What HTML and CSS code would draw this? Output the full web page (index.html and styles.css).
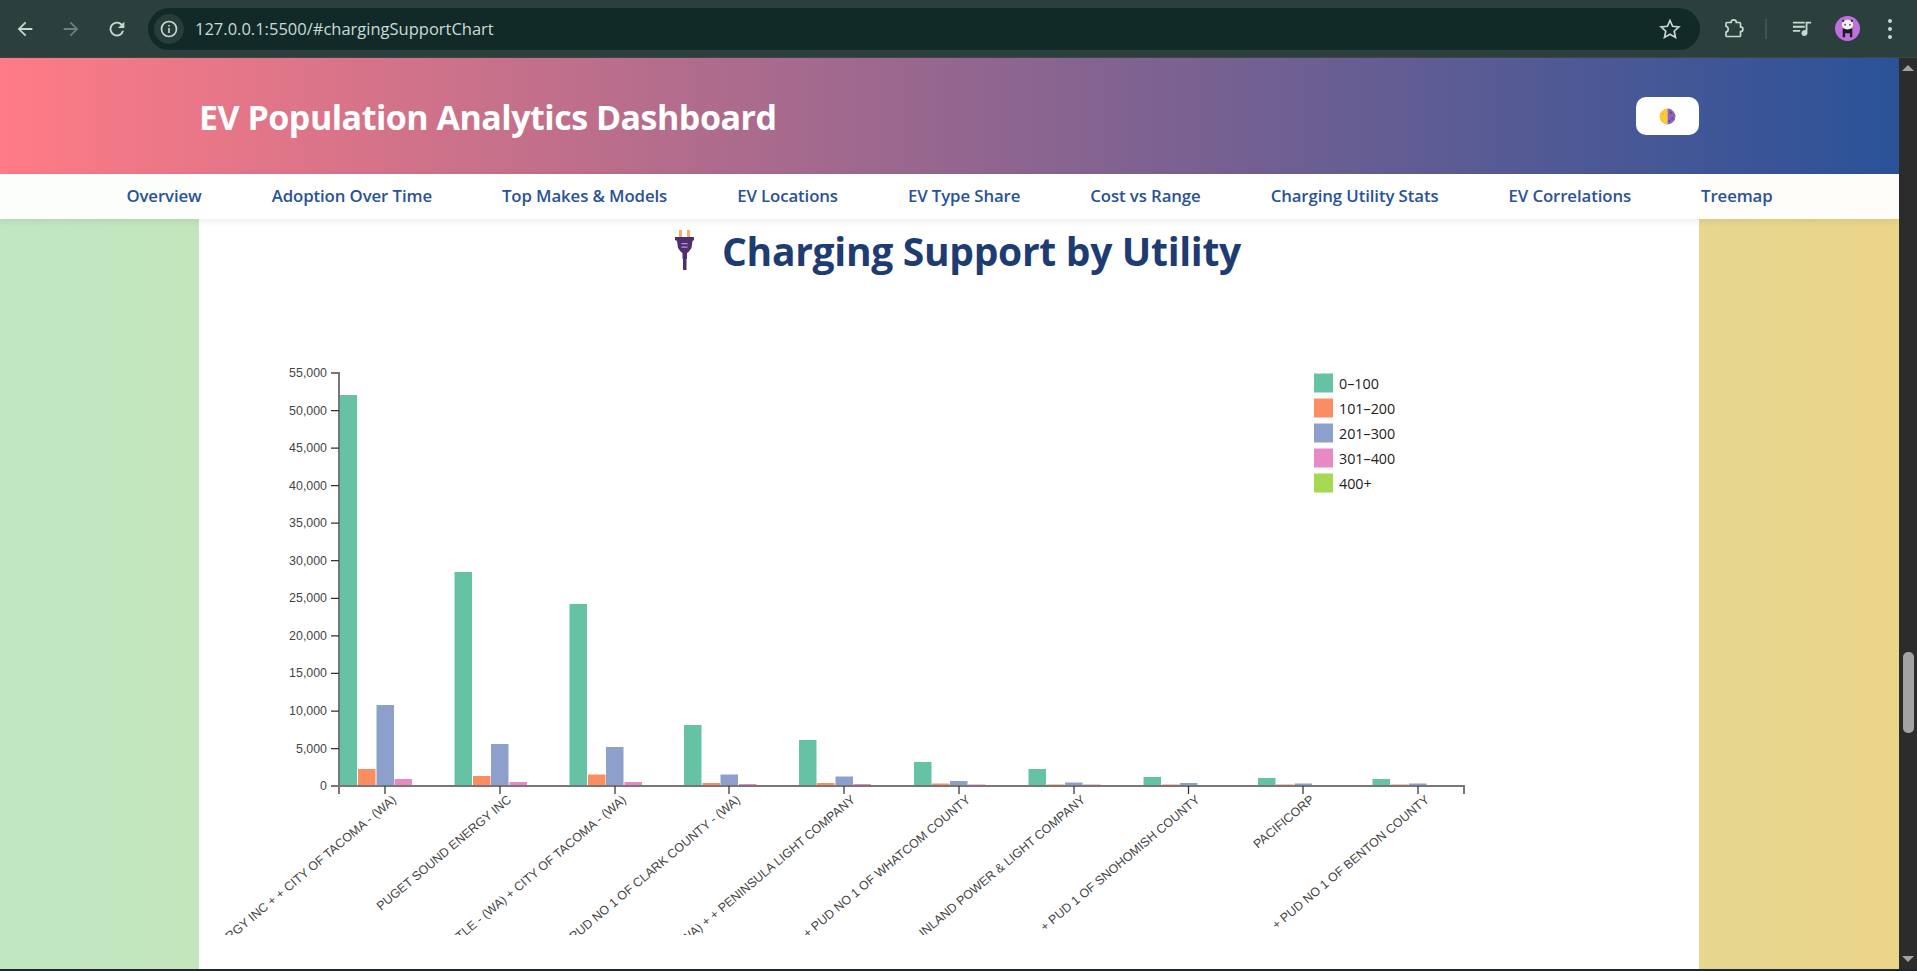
FILE: index.html
```html
<!DOCTYPE html>
<html lang="en">
<head>
    <meta charset="UTF-8">
    <title>EV Population Analytics Dashboard</title>
    <link rel="stylesheet" href="styles.css">
</head>
<body>
    <div class="toolbar">
        <div class="nav-buttons">
            <svg class="tool-icon" viewBox="0 0 24 24"><path d="M20 11H7.8l5.6-5.6L12 4l-8 8 8 8 1.4-1.4L7.8 13H20z"/></svg>
            <svg class="tool-icon disabled" viewBox="0 0 24 24"><path d="M4 11h12.2l-5.6-5.6L12 4l8 8-8 8-1.4-1.4 5.6-5.6H4z"/></svg>
            <svg class="tool-icon" viewBox="0 0 24 24"><path d="M17.6 6.4A8 8 0 1 0 19.7 14h-2.1a6 6 0 1 1-1.4-6.2L13 11h7V4z"/></svg>
        </div>
        <div class="omnibox">
            <span class="site-info">
                <svg viewBox="0 0 20 20"><circle cx="10" cy="10" r="7.5" class="line"/><path d="M9.2 9h1.6v5H9.2zM9.2 6h1.6v1.6H9.2z"/></svg>
            </span>
            <span class="url">127.0.0.1:5500/#chargingSupportChart</span>
            <svg class="star" viewBox="0 0 24 24"><path class="line" d="M12 3.5l2.6 5.8 6.3.7-4.7 4.2 1.3 6.2-5.5-3.2-5.5 3.2 1.3-6.2L3.100 10l6.300-.7z"/></svg>
        </div>
        <div class="tool-right">
            <svg class="puzzle" viewBox="0 0 22 22"><path class="line" d="M3 5.500a1 1 0 0 1 1-1h4a2.700 2.700 0 0 1 5.400 0h3.100a1 1 0 0 1 1 1v3.300a2.400 2.400 0 0 1 0 4.800v3.900a1 1 0 0 1-1 1H4a1 1 0 0 1-1-1v-3.400a3 3 0 0 0 0-5.800z"/></svg>
            <span class="divider"></span>
            <svg class="media" viewBox="0 0 22 22"><path d="M1 3h13v2H1zM1 7.500h13v2H1zM1 12h8v2H1zM15 3h6v2h-4v10.500a3.300 3.300 0 1 1-2-3z"/></svg>
            <span class="avatar">
                <svg viewBox="0 0 26 26"><path fill="#1c1c1c" d="M8 13h10v9h-2.500v-4h-5v4H8z"/><ellipse cx="13" cy="9" rx="6" ry="5" fill="#f2f2f2"/><circle cx="10.500" cy="9" r=".9" fill="#444"/><circle cx="15.500" cy="9" r=".9" fill="#444"/><circle cx="8.500" cy="5" r="1.200" fill="#222"/><circle cx="17.500" cy="5" r="1.200" fill="#222"/></svg>
            </span>
            <span class="dots"><i></i><i></i><i></i></span>
        </div>
    </div>

    <div class="window">
        <div class="page">
            <header class="site-header">
                <div class="header-inner">
                    <h1>EV Population Analytics Dashboard</h1>
                    <button class="theme-toggle" type="button">
                        <svg viewBox="0 0 18 18">
                            <path fill="#fdc92f" d="M9 .6a8.400 8.400 0 0 0 0 16.800z"/>
                            <path fill="#8a63b8" d="M9 .6a8.400 8.400 0 0 1 0 16.800z"/>
                            <circle cx="12.500" cy="5" r="1.200" fill="#5f3f8f"/>
                            <circle cx="14" cy="11" r="1" fill="#5f3f8f"/>
                            <circle cx="11" cy="14" r="1" fill="#5f3f8f"/>
                            <circle cx="4.500" cy="6" r="1.100" fill="#f0b429"/>
                        </svg>
                    </button>
                </div>
            </header>

            <nav class="site-nav">
                <a href="#overview">Overview</a>
                <a href="#adoption">Adoption Over Time</a>
                <a href="#makes">Top Makes &amp; Models</a>
                <a href="#locations">EV Locations</a>
                <a href="#types">EV Type Share</a>
                <a href="#cost">Cost vs Range</a>
                <a href="#chargingSupportChart">Charging Utility Stats</a>
                <a href="#correlations">EV Correlations</a>
                <a href="#treemap">Treemap</a>
            </nav>

            <main class="card">
                <h2>
                    <svg class="plug" viewBox="0 0 19 40">
                        <path fill="#f4b06a" d="M4 0h3v8H4zM12 0h3v8h-3z"/>
                        <path fill="#4f2f6e" d="M0 7h19v3l-1.500 1-1 7-3 4-1.500 1v6h-.5v11H8V29H7.500v-6L6 22l-3-4-1-7-2-1z"/>
                        <path fill="#c08ee8" d="M6.500 13h6v1.300h-6zM6.500 16.500h6v1.300h-6z"/>
                    </svg>
                    <span>Charging Support by Utility</span>
                </h2>

                <svg class="chart" viewBox="199 300 1500 635">
                    <g class="bars">
                        <rect class="c0" x="339.500" y="395" width="17.500" height="391"/>
                        <rect class="c1" x="358" y="769" width="17.500" height="17"/>
                        <rect class="c2" x="376.500" y="705" width="17.500" height="81"/>
                        <rect class="c3" x="394.500" y="779" width="17.500" height="7"/>

                        <rect class="c0" x="454.500" y="572" width="17.500" height="214"/>
                        <rect class="c1" x="473" y="776" width="17.500" height="10"/>
                        <rect class="c2" x="491" y="744" width="17.500" height="42"/>
                        <rect class="c3" x="509.500" y="782" width="17.500" height="4"/>

                        <rect class="c0" x="569.500" y="604" width="17.500" height="182"/>
                        <rect class="c1" x="588" y="774.500" width="17.500" height="11.500"/>
                        <rect class="c2" x="606" y="747" width="17.500" height="39"/>
                        <rect class="c3" x="624.500" y="782" width="17.500" height="4"/>

                        <rect class="c0" x="684" y="725" width="17.500" height="61"/>
                        <rect class="c1" x="702.500" y="783" width="17.500" height="3"/>
                        <rect class="c2" x="720.500" y="774.500" width="17.500" height="11.500"/>
                        <rect class="c3" x="739" y="784" width="17.500" height="2"/>

                        <rect class="c0" x="799" y="740" width="17.500" height="46"/>
                        <rect class="c1" x="817" y="783" width="17.500" height="3"/>
                        <rect class="c2" x="835.500" y="776.500" width="17.500" height="9.500"/>
                        <rect class="c3" x="853.500" y="784" width="17.500" height="2"/>

                        <rect class="c0" x="914" y="762" width="17.500" height="24"/>
                        <rect class="c1" x="932" y="783.500" width="17.500" height="2.500"/>
                        <rect class="c2" x="950" y="781" width="17.500" height="5"/>
                        <rect class="c3" x="968" y="784.500" width="17.500" height="1.500"/>

                        <rect class="c0" x="1028.500" y="769" width="17.500" height="17"/>
                        <rect class="c1" x="1047" y="784.500" width="17.500" height="1.500"/>
                        <rect class="c2" x="1065" y="782.500" width="17.500" height="3.500"/>
                        <rect class="c3" x="1083" y="784.500" width="17.500" height="1.500"/>

                        <rect class="c0" x="1143.500" y="777" width="17.500" height="9"/>
                        <rect class="c1" x="1162" y="784.500" width="17.500" height="1.500"/>
                        <rect class="c2" x="1180" y="783" width="17.500" height="3"/>

                        <rect class="c0" x="1258" y="778" width="17.500" height="8"/>
                        <rect class="c1" x="1276" y="784.500" width="17.500" height="1.500"/>
                        <rect class="c2" x="1294.500" y="783.500" width="17.500" height="2.500"/>

                        <rect class="c0" x="1372.500" y="779" width="17.500" height="7"/>
                        <rect class="c1" x="1391" y="784.500" width="17.500" height="1.500"/>
                        <rect class="c2" x="1409" y="783.500" width="17.500" height="2.500"/>
                    </g>

                    <g class="axis">
                        <path class="domain" d="M331 373H339V786H331"/>
                        <path class="domain" d="M339 794V786H1464V794"/>
                        <path d="M331 410.500h8M331 448h8M331 485.600h8M331 523.200h8M331 560.700h8M331 598.300h8M331 635.800h8M331 673.400h8M331 711h8M331 748.500h8"/>
                        <path d="M385 786v8M500 786v8M615 786v8M729 786v8M844 786v8M959 786v8M1074 786v8M1188.500 786v8M1303 786v8M1418 786v8"/>
                    </g>

                    <g class="y-labels">
                        <text x="327" y="377">55,000</text>
                        <text x="327" y="414.500">50,000</text>
                        <text x="327" y="452">45,000</text>
                        <text x="327" y="489.600">40,000</text>
                        <text x="327" y="527.200">35,000</text>
                        <text x="327" y="564.700">30,000</text>
                        <text x="327" y="602.300">25,000</text>
                        <text x="327" y="639.800">20,000</text>
                        <text x="327" y="677.400">15,000</text>
                        <text x="327" y="715">10,000</text>
                        <text x="327" y="752.500">5,000</text>
                        <text x="327" y="790">0</text>
                    </g>

                    <g class="x-labels">
                        <text transform="translate(397 801) rotate(-40)">PUGET SOUND ENERGY INC + + CITY OF TACOMA - (WA)</text>
                        <text transform="translate(512 801) rotate(-40)">PUGET SOUND ENERGY INC</text>
                        <text transform="translate(627 801) rotate(-40)">CITY OF SEATTLE - (WA) + CITY OF TACOMA - (WA)</text>
                        <text transform="translate(741 801) rotate(-40)">BONNEVILLE POWER + PUD NO 1 OF CLARK COUNTY - (WA)</text>
                        <text transform="translate(856 801) rotate(-40)">BONNEVILLE POWER - (WA) + + PENINSULA LIGHT COMPANY</text>
                        <text transform="translate(971 801) rotate(-40)">+ PUD NO 1 OF WHATCOM COUNTY</text>
                        <text transform="translate(1086 801) rotate(-40)">INLAND POWER &amp; LIGHT COMPANY</text>
                        <text transform="translate(1200.500 801) rotate(-40)">+ PUD 1 OF SNOHOMISH COUNTY</text>
                        <text transform="translate(1315 801) rotate(-40)">PACIFICORP</text>
                        <text transform="translate(1430 801) rotate(-40)">+ PUD NO 1 OF BENTON COUNTY</text>
                    </g>

                    <g class="legend">
                        <rect class="c0" x="1314" y="373.500" width="19" height="19"/>
                        <rect class="c1" x="1314" y="398.500" width="19" height="19"/>
                        <rect class="c2" x="1314" y="423.500" width="19" height="19"/>
                        <rect class="c3" x="1314" y="448.500" width="19" height="19"/>
                        <rect class="c4" x="1314" y="473.500" width="19" height="19"/>
                        <text x="1339" y="388.500">0–100</text>
                        <text x="1339" y="413.500">101–200</text>
                        <text x="1339" y="438.500">201–300</text>
                        <text x="1339" y="463.500">301–400</text>
                        <text x="1339" y="488.500">400+</text>
                    </g>
                </svg>
            </main>
        </div>

        <div class="scrollbar">
            <span class="arrow up"></span>
            <div class="track"><span class="thumb"></span></div>
            <span class="arrow down"></span>
        </div>
    </div>
    <div class="window-edge"></div>
</body>
</html>
```

FILE: styles.css
```css
html, body {
    margin: 0;
    padding: 0;
    height: 971px;
    overflow: hidden;
}
body {
    display: flex;
    flex-direction: column;
    font-family: "Open Sans", "Noto Sans", Arial, sans-serif;
    background: #1e2a30;
}

/* browser bar */
.toolbar {
    flex: 0 0 57px;
    display: flex;
    align-items: center;
    background: #2b403d;
    border-bottom: 1px solid #444;
    color: #c7d8d4;
}
.nav-buttons {
    flex: 0 0 148px;
    display: flex;
    gap: 24px;
    padding-left: 14px;
    box-sizing: border-box;
}
.tool-icon {
    width: 22px;
    height: 22px;
    fill: #c7d8d4;
}
.tool-icon.disabled {
    fill: #6c807c;
}
.line {
    fill: none;
    stroke: #c7d8d4;
    stroke-width: 1.7;
}
.omnibox {
    width: 1552px;
    height: 42px;
    display: flex;
    align-items: center;
    background: #122a27;
    border-radius: 21px;
}
.site-info {
    width: 30px;
    height: 30px;
    margin-left: 6px;
    border-radius: 50%;
    background: #263d3a;
    display: flex;
    align-items: center;
    justify-content: center;
}
.site-info svg {
    width: 20px;
    height: 20px;
    fill: #c7d8d4;
}
.url {
    flex: 1;
    margin-left: 11px;
    font-size: 16.5px;
    color: #c9dcd8;
}
.star {
    width: 24px;
    height: 24px;
    margin-right: 18px;
}
.tool-right {
    flex: 1;
    display: flex;
    align-items: center;
}
.puzzle {
    width: 22px;
    height: 22px;
    margin-left: 23px;
}
.divider {
    width: 2px;
    height: 20px;
    margin-left: 20px;
    background: #3e5450;
}
.media {
    width: 20px;
    height: 20px;
    margin-left: 25px;
    fill: #c7d8d4;
}
.avatar {
    width: 25px;
    height: 25px;
    margin-left: 23px;
    border-radius: 50%;
    background: #c06fe0;
    overflow: hidden;
}
.avatar svg {
    display: block;
    width: 25px;
    height: 25px;
}
.dots {
    margin-left: 28px;
    display: flex;
    flex-direction: column;
    gap: 4px;
}
.dots i {
    width: 4px;
    height: 4px;
    border-radius: 50%;
    background: #c7d8d4;
}

/* page */
.window {
    flex: 1;
    display: flex;
    min-height: 0;
}
.window-edge {
    flex: 0 0 2px;
    background: #1e2a30;
}
.page {
    width: 1899px;
    background: linear-gradient(90deg, #bfe7c2, #ebd58a);
}
.site-header {
    height: 116px;
    background: linear-gradient(90deg, #ff7b86, #2a5298);
}
.header-inner {
    width: 1500px;
    height: 100%;
    margin-left: 199px;
    display: flex;
    align-items: center;
    justify-content: space-between;
}
h1 {
    margin: 2px 0 0;
    font-size: 34px;
    font-weight: 700;
    letter-spacing: -0.5px;
    color: #fff;
}
.theme-toggle {
    width: 63px;
    height: 38px;
    margin-top: -1px;
    padding: 0;
    border: 0;
    border-radius: 10px;
    background: #fff;
    display: flex;
    align-items: center;
    justify-content: center;
    cursor: pointer;
}
.theme-toggle svg {
    width: 17px;
    height: 17px;
    margin-top: 2px;
}
.site-nav {
    position: relative;
    height: 45px;
    margin-bottom: -45px;
    padding-bottom: 2px;
    box-sizing: border-box;
    display: flex;
    align-items: center;
    justify-content: center;
    gap: 70px;
    background: rgba(255, 255, 255, 0.95);
    box-shadow: 0 2px 8px rgba(0, 0, 0, 0.08);
}
.site-nav a {
    font-size: 16.8px;
    font-weight: 600;
    letter-spacing: -0.1px;
    color: #2a5298;
    text-decoration: none;
}
.card {
    width: 1500px;
    height: 795px;
    margin-left: 199px;
    padding-top: 49px;
    box-sizing: border-box;
    background: #fff;
}
h2 {
    height: 54px;
    margin: 0 0 23px 476px;
    display: flex;
    align-items: center;
    font-size: 39px;
    font-weight: 700;
    letter-spacing: -0.3px;
    color: #1e3c72;
}
.plug {
    width: 19px;
    height: 40px;
    margin-right: 28px;
}
.chart {
    display: block;
    width: 1500px;
    height: 635px;
}

/* chart */
.c0 { fill: #66c2a5; }
.c1 { fill: #fc8d62; }
.c2 { fill: #8da0cb; }
.c3 { fill: #e78ac3; }
.c4 { fill: #a6d854; }
.axis path {
    fill: none;
    stroke: #333;
    stroke-width: 1.25;
}
.axis .domain {
    stroke: #777;
    stroke-width: 2;
}
.y-labels text, .x-labels text {
    font-family: "Liberation Sans", Arial, sans-serif;
    font-size: 12.4px;
    fill: #444;
    text-anchor: end;
}
.legend text {
    font-size: 14.3px;
    fill: #222;
}

/* scrollbar */
.scrollbar {
    width: 18px;
    display: flex;
    flex-direction: column;
    align-items: center;
    background: #2c2c2c;
}
.arrow {
    width: 0;
    height: 0;
    border-left: 6px solid transparent;
    border-right: 6px solid transparent;
}
.arrow.up {
    margin-top: 7px;
    border-bottom: 6px solid #a3a3a3;
}
.arrow.down {
    margin-bottom: 7px;
    border-top: 6px solid #a3a3a3;
}
.track {
    flex: 1;
    padding-top: 581px;
}
.thumb {
    display: block;
    width: 11px;
    height: 81px;
    border-radius: 5px;
    background: #a3a3a3;
}
```
